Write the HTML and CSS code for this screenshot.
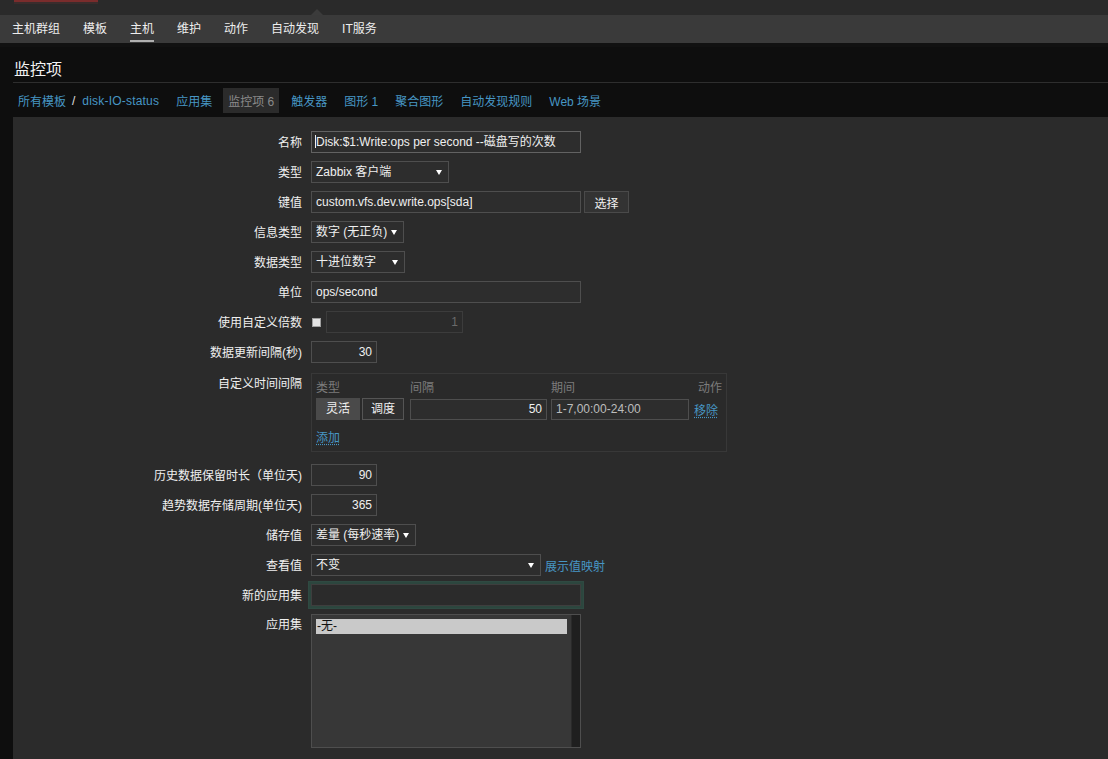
FILE: index.html
```html
<!DOCTYPE html>
<html lang="zh">
<head>
<meta charset="utf-8">
<title>监控项</title>
<link rel="stylesheet" href="styles.css">
</head>
<body>
<div class="topstrip">
  <span class="brand"></span>
  <span class="pointer"></span>
</div>
<nav class="mainnav">
  <a class="nav-item">主机群组</a>
  <a class="nav-item">模板</a>
  <a class="nav-item active">主机</a>
  <a class="nav-item">维护</a>
  <a class="nav-item">动作</a>
  <a class="nav-item">自动发现</a>
  <a class="nav-item">IT服务</a>
</nav>
<div class="page">
  <div class="titlebar"><h1>监控项</h1></div>
  <div class="tabs">
    <a class="tab-link crumb">所有模板</a>
    <span class="slash">/</span>
    <a class="tab-link crumb2">disk-IO-status</a>
    <a class="tab-link">应用集</a>
    <span class="tab-current">监控项 6</span>
    <a class="tab-link">触发器</a>
    <a class="tab-link">图形 1</a>
    <a class="tab-link">聚合图形</a>
    <a class="tab-link">自动发现规则</a>
    <a class="tab-link">Web 场景</a>
  </div>
  <div class="panel">
    <div class="form">
      <label class="lbl">名称</label>
      <div class="field"><div class="input w270 focused"><span class="caret-line"></span>Disk:$1:Write:ops per second --磁盘写的次数</div></div>

      <label class="lbl">类型</label>
      <div class="field"><div class="select w138">Zabbix 客户端<span class="arrow"></span></div></div>

      <label class="lbl">键值</label>
      <div class="field"><div class="input w270">custom.vfs.dev.write.ops[sda]</div><button class="btn">选择</button></div>

      <label class="lbl">信息类型</label>
      <div class="field"><div class="select w93">数字 (无正负)<span class="arrow"></span></div></div>

      <label class="lbl">数据类型</label>
      <div class="field"><div class="select w94">十进位数字<span class="arrow"></span></div></div>

      <label class="lbl">单位</label>
      <div class="field"><div class="input w270">ops/second</div></div>

      <label class="lbl">使用自定义倍数</label>
      <div class="field"><span class="checkbox"></span><div class="input w137 disabled num">1</div></div>

      <label class="lbl">数据更新间隔(秒)</label>
      <div class="field"><div class="input w66 num">30</div></div>

      <label class="lbl top iv-lbl">自定义时间间隔</label>
      <div class="field intervals-field">
        <div class="intervals">
          <div class="iv-head">
            <span class="c-type">类型</span>
            <span class="c-int">间隔</span>
            <span class="c-per">期间</span>
            <span class="c-act">动作</span>
          </div>
          <div class="iv-row">
            <div class="c-type seg">
              <span class="seg-btn on">灵活</span>
              <span class="seg-btn">调度</span>
            </div>
            <div class="input c-int num">50</div>
            <div class="input c-per dim">1-7,00:00-24:00</div>
            <a class="link c-act">移除</a>
          </div>
          <div class="iv-add"><a class="link">添加</a></div>
        </div>
      </div>

      <label class="lbl">历史数据保留时长（单位天)</label>
      <div class="field"><div class="input w66 num">90</div></div>

      <label class="lbl">趋势数据存储周期(单位天)</label>
      <div class="field"><div class="input w66 num">365</div></div>

      <label class="lbl">储存值</label>
      <div class="field"><div class="select w105">差量 (每秒速率)<span class="arrow"></span></div></div>

      <label class="lbl">查看值</label>
      <div class="field"><div class="select w230">不变<span class="arrow"></span></div><a class="link plain">展示值映射</a></div>

      <label class="lbl">新的应用集</label>
      <div class="field"><div class="glow"><div class="input w270 inner"></div></div></div>

      <label class="lbl top">应用集</label>
      <div class="field">
        <div class="listbox">
          <div class="options"><div class="opt sel">-无-</div></div>
          <div class="scrollbar"></div>
        </div>
      </div>
    </div>
  </div>
</div>
</body>
</html>
```

FILE: styles.css
```css
* { box-sizing: border-box; }
html, body {
  margin: 0;
  padding: 0;
  height: 759px;
  overflow: hidden;
  background: #0c0c0c;
  font-family: "Liberation Sans", Arial, "Noto Sans CJK SC", sans-serif;
  font-size: 12px;
  color: #f0f0f0;
}

/* top strip */
.topstrip {
  height: 15px;
  background: #2a2a2a;
  display: flex;
  align-items: flex-start;
}
.brand {
  margin-left: 14px;
  width: 84px;
  height: 4px;
  background: linear-gradient(#7a2c2c 0, #7a2c2c 2px, #3a2c2c 2px, #3a2c2c 4px);
}
.pointer {
  margin-left: 213px;
  margin-top: 9px;
  width: 0;
  height: 0;
  border-left: 6px solid transparent;
  border-right: 6px solid transparent;
  border-bottom: 6px solid #3b3b3b;
}

/* main nav */
.mainnav {
  height: 28px;
  background: #3a3a3a;
  display: flex;
  align-items: stretch;
  padding-left: 12px;
  gap: 23px;
  border-bottom: 4px solid #111;
  box-sizing: content-box;
}
.nav-item {
  color: #eeeeee;
  display: flex;
  align-items: center;
  position: relative;
  padding-bottom: 3px;
}
.nav-item.active::after {
  content: "";
  position: absolute;
  left: 0;
  right: 0;
  bottom: 1px;
  height: 2px;
  background: #b0b0b0;
}

/* page */
.page {
  padding-left: 13px;
  background: #0e0e0e;
  height: 712px;
  display: flex;
  flex-direction: column;
}
.titlebar {
  height: 36px;
  border-bottom: 1px solid #2e2e2e;
  display: flex;
  align-items: center;
  padding-top: 6px;
}
.titlebar h1 {
  margin: 0 0 0 1px;
  font-size: 16px;
  font-weight: normal;
  color: #f2f2f2;
}

.tabs {
  margin-top: 5px;
  height: 25px;
  display: flex;
  align-items: center;
  padding-left: 5px;
}
.tab-link {
  color: #4796c4;
  margin-right: 17px;
}
.tab-link.crumb { margin-right: 6px; }
.crumb2 { letter-spacing: 0.2px; margin-right: 17px; }
.slash { color: #e0e0e0; margin-right: 7px; }
.tab-current {
  background: #2b2b2b;
  color: #8a8a8a;
  height: 25px;
  display: flex;
  align-items: center;
  padding: 0 5px;
  margin-left: -6px;
  margin-right: 12px;
}

.panel {
  margin-top: 4px;
  flex: 1;
  background: #2b2b2b;
  padding-top: 14px;
}

/* form grid */
.form {
  display: grid;
  grid-template-columns: 289px 1fr;
  column-gap: 9px;
  row-gap: 8px;
}
.lbl {
  text-align: right;
  color: #f0f0f0;
  height: 22px;
  line-height: 22px;
  padding-top: 1px;
  white-space: nowrap;
}
.lbl.top { line-height: 20px; }
.lbl.iv-lbl { margin-top: 2px; }
.field {
  display: flex;
  align-items: center;
  gap: 3px;
  min-height: 22px;
}

.input, .select {
  height: 22px;
  line-height: 20px;
  border: 1px solid #4e4e4e;
  background: #2d2d2d;
  color: #f0f0f0;
  padding: 0 4px;
  white-space: nowrap;
  overflow: hidden;
  position: relative;
}
.input.focused { border-color: #626262; }
.caret-line {
  display: inline-block;
  width: 1px;
  height: 13px;
  background: #f0f0f0;
  vertical-align: -2px;
  margin-left: -1px;
}
.num { text-align: right; }
.disabled { color: #6a6a6a; background: #2b2b2b; border-color: #3c3c3c; }
.dim { color: #bdbdbd; }
.w270 { width: 270px; }
.w138 { width: 138px; }
.w137 { width: 137px; }
.w93 { width: 93px; }
.w94 { width: 94px; }
.w105 { width: 105px; }
.w230 { width: 230px; }
.w66 { width: 66px; }

.select { padding-right: 16px; }
.arrow {
  position: absolute;
  right: 6px;
  top: 8px;
  width: 0;
  height: 0;
  border-left: 3px solid transparent;
  border-right: 3px solid transparent;
  border-top: 5px solid #ffffff;
}

.btn {
  height: 22px;
  width: 45px;
  background: #333333;
  border: 1px solid #4a4a4a;
  color: #f0f0f0;
  font: inherit;
  padding: 0;
}

.checkbox {
  width: 9px;
  height: 9px;
  background: #e4e4e4;
  border: 1px solid #a0a0a0;
  margin-left: 1px;
  margin-right: 2px;
}

/* intervals */
.intervals-field { margin-top: 2px; margin-bottom: 4px; }
.intervals {
  width: 416px;
  height: 79px;
  border: 1px solid #383838;
  background: #2a2a2a;
  padding: 0 4px;
}
.iv-head, .iv-row {
  display: flex;
  align-items: center;
}
.iv-head {
  height: 24px;
  color: #7c7c7c;
}
.c-type { width: 94px; }
.c-int { width: 137px; margin-right: 4px; }
.c-per { width: 138px; margin-right: 5px; }
.c-act { width: 28px; }
.iv-head .c-act { text-align: right; }
.iv-row { height: 22px; }
.seg { display: flex; gap: 2px; height: 22px; }
.seg-btn {
  height: 22px;
  line-height: 20px;
  padding: 0;
  text-align: center;
  white-space: nowrap;
  border: 1px solid #555;
  background: #2f2f2f;
  color: #f0f0f0;
  width: 42px;
}
.seg-btn.on {
  background: #4a4a4a;
  border-color: #4a4a4a;
  width: 44px;
}
.iv-row .input { height: 21px; line-height: 19px; }
.iv-add {
  height: 28px;
  display: flex;
  align-items: center;
  padding-top: 4px;
}

.link {
  color: #4796c4;
  text-decoration: underline dotted;
  text-underline-offset: 2px;
}
.link.plain { text-decoration: none; margin-left: 1px; }

/* new application */
.glow {
  margin: -3px 0 -3px -3px;
  padding: 2px;
  background: #2c463e;
  border: 1px solid #2f4a42;
}
.glow .inner {
  width: 270px;
  height: 22px;
  border-color: #3e3e3e;
  background: #2b2b2b;
}

/* listbox */
.listbox {
  width: 270px;
  height: 134px;
  border: 1px solid #4e4e4e;
  background: #373737;
  display: flex;
  padding: 4px 0 0 4px;
}
.options { flex: 1; }
.opt.sel {
  height: 15px;
  line-height: 15px;
  background: #c9c9c9;
  color: #111;
  padding-left: 1px;
  margin-right: 4px;
}
.scrollbar {
  width: 9px;
  margin-top: -4px;
  background: #1f1f1f;
  border-left: 1px solid #2a2a2a;
}
```
